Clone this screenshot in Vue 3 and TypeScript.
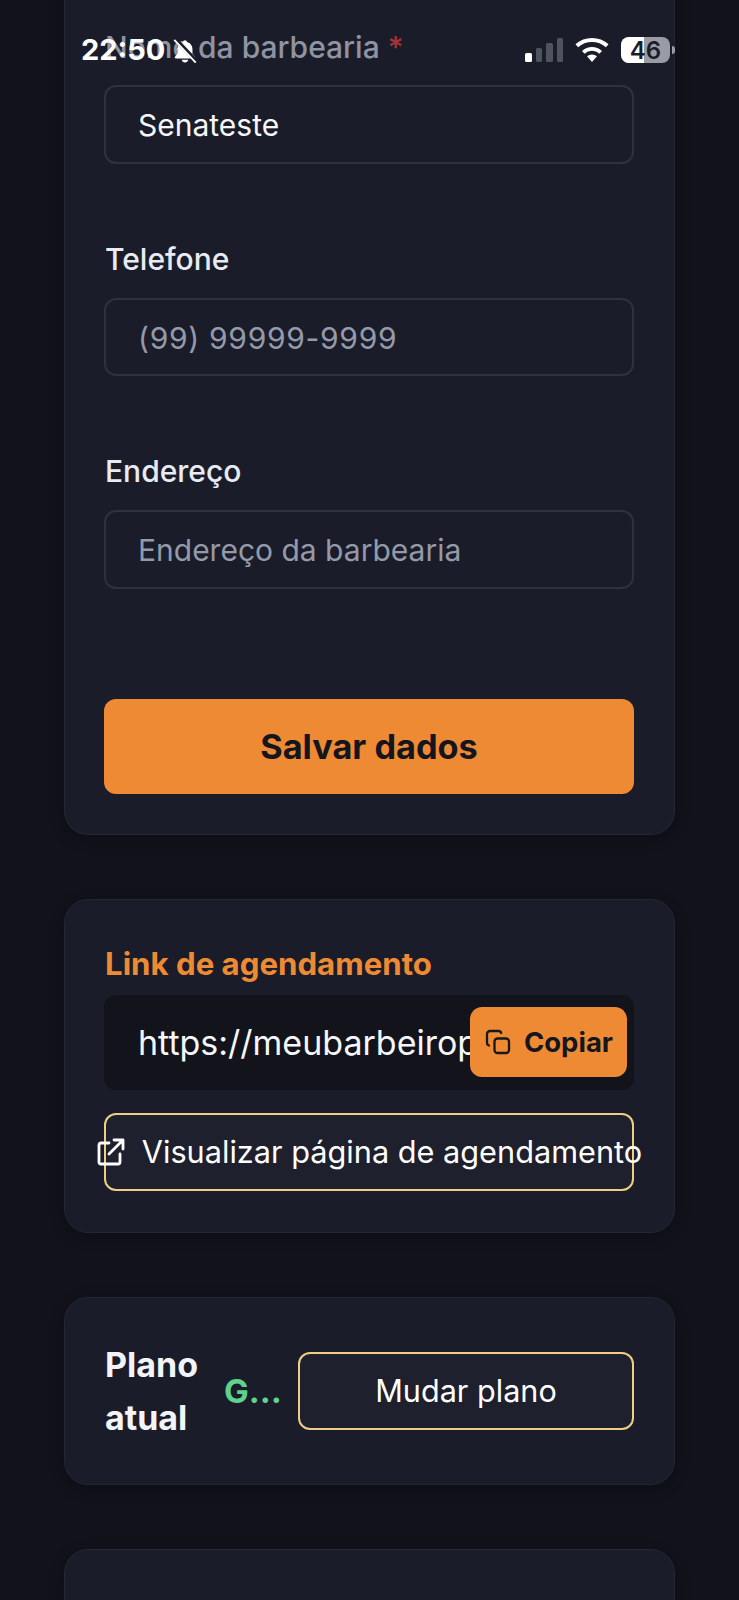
<script setup lang="ts">
const fields = [
  { label: 'Telefone', placeholder: '(99) 99999-9999', cls: 'phone' },
  { label: 'Endereço', placeholder: 'Endereço da barbearia', cls: '' },
]
</script>

<template>
  <div class="page">
    <div class="status">
      <span class="time">22:50</span>
      <svg class="bell" width="28" height="28" viewBox="0 0 30 30">
        <path d="M15 3.500c1.200 0 2 .8 2.100 1.900 3.700 1 5.900 4 5.900 8v4.500l2.700 3.300c.6.8.1 1.800-.9 1.800H5.200c-1 0-1.500-1-.9-1.800L7 17.900v-4.500c0-4 2.200-7 5.900-8C13 4.300 13.800 3.500 15 3.500z" fill="#fff" />
        <path d="M11.500 24.500h7c-.3 1.700-1.700 2.800-3.500 2.800s-3.200-1.100-3.500-2.800z" fill="#fff" />
        <path d="M4.500 2 27.500 26.500" stroke="#1a1d29" stroke-width="4.500" />
        <path d="M3.500 3 26.500 27.500" stroke="#fff" stroke-width="2" />
      </svg>
      <span class="spacer"></span>
      <span class="signal">
        <i class="bar on b1"></i><i class="bar b2"></i><i class="bar b3"></i><i class="bar b4"></i>
      </span>
      <svg class="wifi" width="36" height="26" viewBox="0 0 36 26">
        <path d="M18 25 13 19.300a7.500 7.500 0 0 1 10 0z" fill="#fff" />
        <path d="M9.300 15.300a13 13 0 0 1 17.400 0" stroke="#fff" stroke-width="3.800" fill="none" />
        <path d="M2.800 8.800a22.500 22.500 0 0 1 30.400 0" stroke="#fff" stroke-width="4" fill="none" />
      </svg>
      <span class="battery">
        <span class="fill"></span>
        <span class="num">46</span>
      </span>
      <i class="nub"></i>
    </div>

    <section class="card first">
      <div class="label muted">Nome da barbearia <span class="req">*</span></div>
      <div class="input value">Senateste</div>
      <template v-for="f in fields" :key="f.label">
        <div class="label spaced">{{ f.label }}</div>
        <div class="input placeholder" :class="f.cls">{{ f.placeholder }}</div>
      </template>
      <button class="save">Salvar dados</button>
    </section>

    <section class="card link">
      <div class="link-title">Link de agendamento</div>
      <div class="url">
        <span class="url-text">https://meubarbeiropro.app/senateste</span>
        <button class="copy">
          <svg width="28" height="28" viewBox="0 0 28 28" fill="none" stroke="#17181f" stroke-width="2.300">
            <rect x="10.500" y="10.500" width="14.500" height="14.500" rx="3" />
            <path d="M5 17.500c-1.300-.4-2-1.400-2-2.700V6c0-1.700 1.300-3 3-3h8.500c1.300 0 2.300.7 2.700 2" stroke-linecap="round" />
          </svg>
          <span>Copiar</span>
        </button>
      </div>
      <button class="outline view">
        <svg class="ext" width="30" height="30" viewBox="0 0 30 30" fill="none" stroke="#fff" stroke-width="2.800" stroke-linecap="round" stroke-linejoin="round">
          <path d="M13 6H5a2 2 0 0 0-2 2v17a2 2 0 0 0 2 2h17a2 2 0 0 0 2-2v-8" />
          <path d="M13 17 27 3M18 3h9v9" />
        </svg>
        <span>Visualizar página de agendamento</span>
      </button>
    </section>

    <section class="card plan">
      <div class="plan-title">Plano atual</div>
      <div class="plan-name">Gratuito</div>
      <button class="outline change">Mudar plano</button>
    </section>

    <section class="card last"></section>
  </div>
</template>

<style>
html, body { margin: 0; background: #11121a; }
</style>

<style scoped>
.page {
  position: relative;
  width: 739px;
  height: 1600px;
  overflow: hidden;
  background: #11121a;
  font-family: Inter, "Liberation Sans", sans-serif;
  color: #f2f4f9;
}
button { font-family: inherit; }
.status {
  position: absolute;
  left: 81px;
  top: 33px;
  width: 594px;
  height: 34px;
  display: flex;
  align-items: center;
  z-index: 2;
  color: #fff;
}
.time { font-size: 29px; font-weight: 700; line-height: 34px; width: 90px; }
.bell { flex: none; margin-top: 2px; }
.spacer { flex: 1; }
.signal { display: flex; align-items: flex-end; gap: 4px; height: 24px; margin-right: 11px; }
.bar { display: block; width: 6.500px; background: #4f5360; border-radius: 1.500px; }
.bar.on { background: #fff; }
.b1 { height: 9px; }
.b2 { height: 14px; }
.b3 { height: 19px; }
.b4 { height: 24px; }
.wifi { flex: none; margin-right: 11px; }
.battery {
  position: relative;
  width: 49px;
  height: 26px;
  background: #9a9ca3;
  border-radius: 8px;
  overflow: hidden;
  display: flex;
  align-items: center;
  justify-content: center;
}
.fill { position: absolute; left: 0; top: 0; bottom: 0; width: 46%; background: #fff; }
.num { position: relative; font-size: 24px; font-weight: 600; color: #1a1d29; }
.nub { width: 3px; height: 8px; background: #9a9ca3; border-radius: 0 3px 3px 0; margin-left: 2px; }

.card {
  box-sizing: border-box;
  width: 611px;
  margin: 0 0 64px 64px;
  padding: 41px 40px 41px 39px;
  background: #1a1d29;
  border: 1px solid #232633;
  border-radius: 24px;
  box-shadow: 0 4px 16px rgba(0, 0, 0, 0.2);
}
.first { margin-top: -40px; padding-top: 70px; padding-bottom: 40px; border-top: 0; }
.label { margin-left: 1px; font-size: 30px; font-weight: 500; line-height: 36px; color: #e8ebf3; margin-bottom: 21px; }
.label.muted { color: #8f93a3; margin-top: -1px; margin-bottom: 20px; }
.req { color: #a8323a; }
.spaced { margin-top: 77px; }
.input {
  box-sizing: border-box;
  height: 78.500px;
  padding: 2px 32px 0;
  display: flex;
  align-items: center;
  border: 2px solid #2d323f;
  border-radius: 12px;
  font-size: 30px;
}
.value { color: #f6f7fb; }
.placeholder { color: #949aaa; }
.phone { letter-spacing: 0.7px; }
.save {
  display: block;
  width: 100%;
  height: 95px;
  margin-top: 110px;
  border: 0;
  border-radius: 12px;
  background: #ef8a34;
  color: #15161d;
  font-size: 34.300px;
  font-weight: 700;
}
.link { padding-top: 47px; }
.link-title { margin-left: 1px; font-size: 31.200px; font-weight: 700; line-height: 34px; color: #ef8a34; margin-bottom: 14px; }
.url {
  box-sizing: border-box;
  height: 95px;
  padding: 0 7px 0 34px;
  display: flex;
  align-items: center;
  background: #12131b;
  border-radius: 12px;
}
.url-text {
  flex: 1;
  min-width: 0;
  overflow: hidden;
  font-size: 34px;
  white-space: nowrap;
  color: #f6f7fb;
}
.copy {
  flex: none;
  width: 157px;
  height: 70px;
  display: flex;
  align-items: center;
  justify-content: center;
  gap: 12px;
  padding: 0;
  border: 0;
  border-radius: 12px;
  background: #ef8a34;
  color: #15161d;
  font-size: 27.500px;
  font-weight: 700;
}
.outline {
  box-sizing: border-box;
  height: 78px;
  border: 2px solid #f0cd85;
  border-radius: 12px;
  background: #1e202d;
  color: #fff;
  font-size: 30.600px;
  font-weight: 400;
  white-space: nowrap;
}
.view {
  width: 100%;
  margin-top: 23px;
  display: flex;
  align-items: center;
  justify-content: center;
  gap: 16px;
  padding: 0;
  font-size: 30.700px;
}
.ext { flex: none; }
.plan { display: flex; align-items: center; gap: 26px; padding-top: 40px; padding-bottom: 40px; }
.plan-title { margin-left: 1px; width: 93px; flex: none; font-size: 34px; font-weight: 700; line-height: 53px; }
.plan-name {
  width: 58px;
  flex: none;
  overflow: hidden;
  text-overflow: ellipsis;
  white-space: nowrap;
  color: #5fd38d;
  font-size: 33px;
  font-weight: 700;
}
.change { flex: 1; margin-left: -10px; }
.last { height: 200px; margin-bottom: 0; }
</style>
